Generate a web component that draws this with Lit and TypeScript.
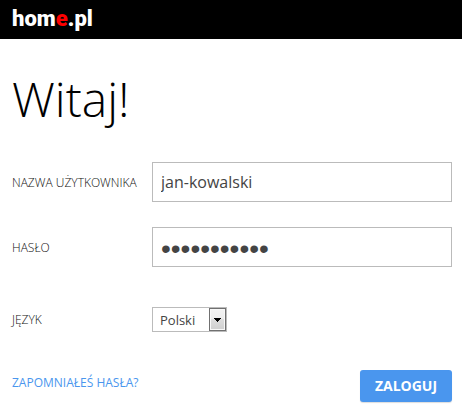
import { LitElement, html, css } from "lit";
import { customElement, state } from "lit/decorators.js";

@customElement("app-root")
export class AppRoot extends LitElement {
  static styles = css`
    :host {
      display: block;
      min-height: 100vh;
      background: #fff;
      color: #444;
      font-family: "Open Sans", "Noto Sans", sans-serif;
      font-size: 12px;
    }
    * {
      box-sizing: border-box;
    }
    .bar {
      display: flex;
      align-items: center;
      height: 39px;
      padding: 0 12px 1px;
      background: #000;
    }
    .logo {
      color: #fff;
      font: 900 22px/32px Roboto, "Liberation Sans", sans-serif;
      text-decoration: none;
    }
    .accent {
      color: #f00;
    }
    .page {
      padding: 28px 10px 10px 12px;
    }
    .title {
      margin: 0 0 31px;
      color: #000;
      font-size: 48px;
      font-weight: 300;
      line-height: 64px;
    }
    .form {
      display: grid;
      grid-template-columns: 140px 1fr;
      align-items: center;
    }
    .label {
      color: #111;
      font-weight: 300;
      line-height: 16px;
    }
    .field {
      width: 100%;
      height: 40px;
      margin: 0 0 25px;
      padding: 0 8px;
      border: 1px solid #bbb;
      border-radius: 0;
      background: #fff;
      color: #444;
      font: 16px/24px "Open Sans", "Noto Sans", sans-serif;
      outline: none;
    }
    .secret {
      padding-top: 4px;
      font: 28px/32px "Liberation Sans", sans-serif;
    }
    .label.tall {
      margin-bottom: 24px;
    }
    .picker {
      display: grid;
      width: 75px;
      height: 25px;
      margin: 15px 0 38px;
    }
    .label.short {
      margin: 15px 0 38px;
    }
    .select,
    .arrow {
      grid-area: 1 / 1;
    }
    .select {
      appearance: none;
      margin: 0;
      padding: 0 20px 0 7px;
      border: 1px solid #bbb;
      border-radius: 0;
      background: #fff;
      color: #444;
      font: 13px/18px "Open Sans", "Noto Sans", sans-serif;
      outline: none;
    }
    .arrow {
      justify-self: end;
      width: 17px;
      height: 23px;
      margin: 1px;
      border: 1px solid #707070;
      background: linear-gradient(#f3f3f3, #ececec 50%, #dddddd 50%, #cfcfcf);
      box-shadow: inset 0 0 0 1px #f8f8f8;
      pointer-events: none;
    }
    .actions {
      grid-column: 1 / -1;
      display: flex;
      justify-content: space-between;
      align-items: center;
    }
    .link {
      color: #4a96ee;
      line-height: 16px;
      margin-bottom: 6px;
      text-decoration: none;
    }
    .submit {
      width: 92px;
      height: 32px;
      padding: 0;
      border: 0;
      border-radius: 3px;
      background: #4a96ee;
      box-shadow: 0 1px 1px #ddd;
      color: #fff;
      font: bold 14px/20px "Open Sans", "Noto Sans", sans-serif;
    }
  `;

  @state() private user = "jan-kowalski";
  @state() private password = "kowalski123";

  private onSubmit(event: Event) {
    event.preventDefault();
  }

  render() {
    return html`
      <header class="bar">
        <a class="logo" href="#">hom<span class="accent">e</span>.pl</a>
      </header>
      <main class="page">
        <h1 class="title">Witaj!</h1>
        <form class="form" @submit=${this.onSubmit}>
          <label class="label tall" for="user">NAZWA UŻYTKOWNIKA</label>
          <input class="field" id="user" type="text" .value=${this.user} />
          <label class="label tall" for="password">HASŁO</label>
          <input class="field secret" id="password" type="password" .value=${this.password} />
          <label class="label short" for="lang">JĘZYK</label>
          <div class="picker">
            <select class="select" id="lang">
              <option>Polski</option>
            </select>
            <svg class="arrow" viewBox="0 0 15 21" aria-hidden="true">
              <path d="M4 9h7v1h-1v1H9v1H8v1H7v-1H6v-1H5v-1H4z" fill="#000" shape-rendering="crispEdges" />
            </svg>
          </div>
          <div class="actions">
            <a class="link" href="#">ZAPOMNIAŁEŚ HASŁA?</a>
            <button class="submit" type="submit">ZALOGUJ</button>
          </div>
        </form>
      </main>
    `;
  }
}
